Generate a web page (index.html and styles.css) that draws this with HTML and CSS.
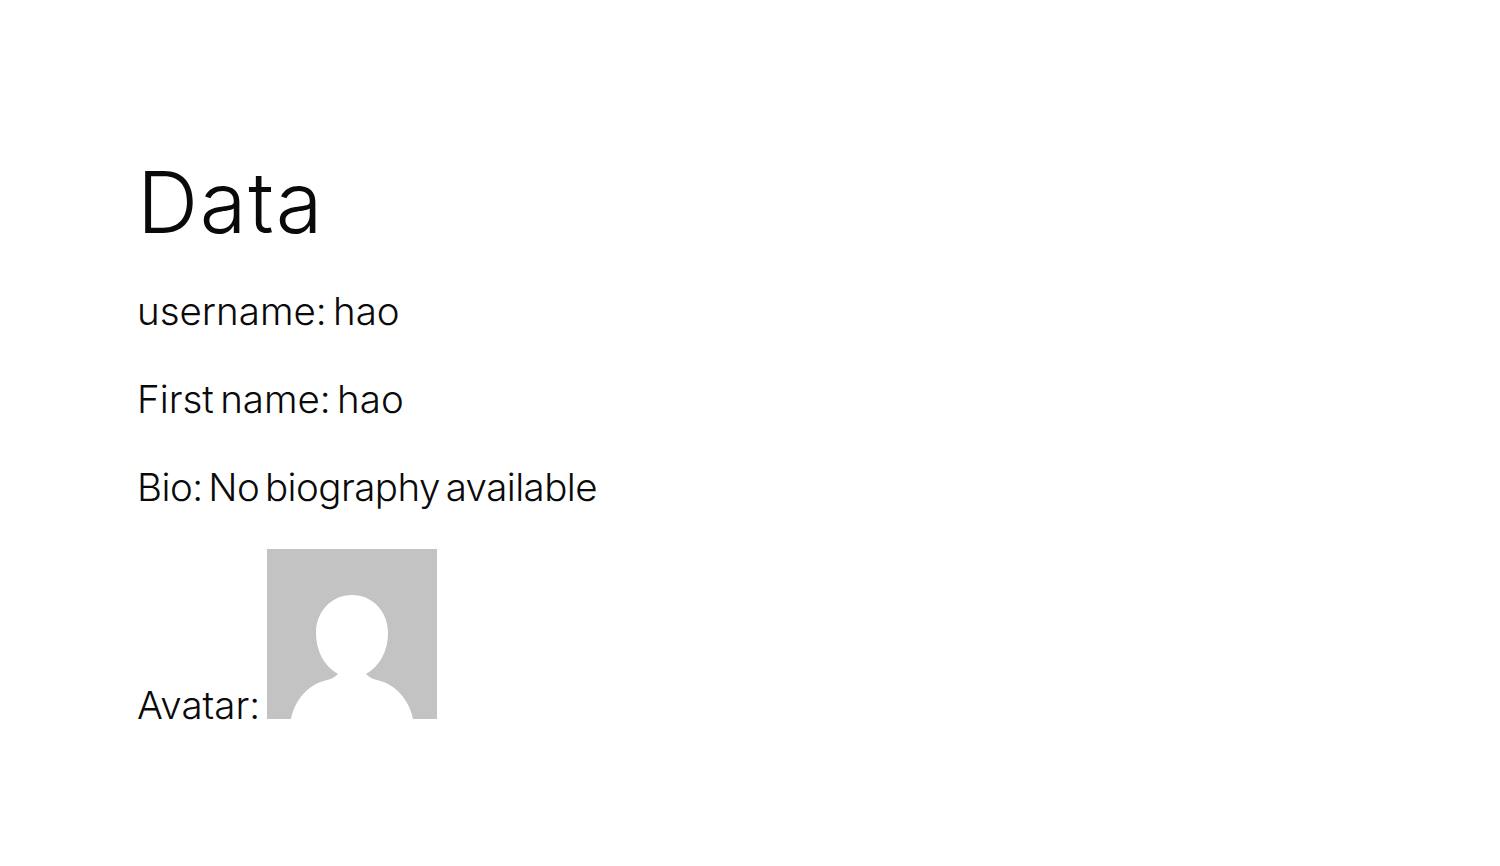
FILE: index.html
```html
<!DOCTYPE html>
<html lang="en">
<head>
  <meta charset="UTF-8" />
  <title>Data</title>
  <link rel="stylesheet" href="styles.css">
</head>
<body>
  <div class="container">
    <h1>Data</h1>
    <p>username: hao</p>
    <p>First name: hao</p>
    <p class="bio">Bio: No biography available</p>
    <p class="avatar-row">Avatar:
      <svg class="avatar" viewBox="0 0 170 170" width="170" height="170">
        <rect width="170" height="170" fill="#c3c3c3"/>
        <path fill="#fff" d="M24 170C28 150 42 135 60 131C65 130 68 128 71 125C57 117 49 102 49 84C49 62 65 46 85 46C105 46 121 62 121 84C121 102 113 117 99 125C102 128 105 130 110 131C128 135 142 150 146 170Z"/>
      </svg>
    </p>
  </div>
</body>
</html>
```

FILE: styles.css
```css
body {
  margin: 0;
  background-color: #fff;
  color: #0a0a0a;
  font-family: Inter, "Liberation Sans", sans-serif;
}

.container {
  padding: 155px 137px 0;
}

h1 {
  margin: 0 0 36px;
  font-size: 85px;
  font-weight: 300;
  line-height: 96px;
  letter-spacing: 1.7px;
}

p {
  margin: 0 0 40px;
  font-size: 38.5px;
  font-weight: 300;
  line-height: 48px;
  word-spacing: -4.5px;
}

.bio {
  margin-bottom: 38px;
  letter-spacing: -0.55px;
}

.avatar {
  margin-left: 1px;
  vertical-align: baseline;
}
```
